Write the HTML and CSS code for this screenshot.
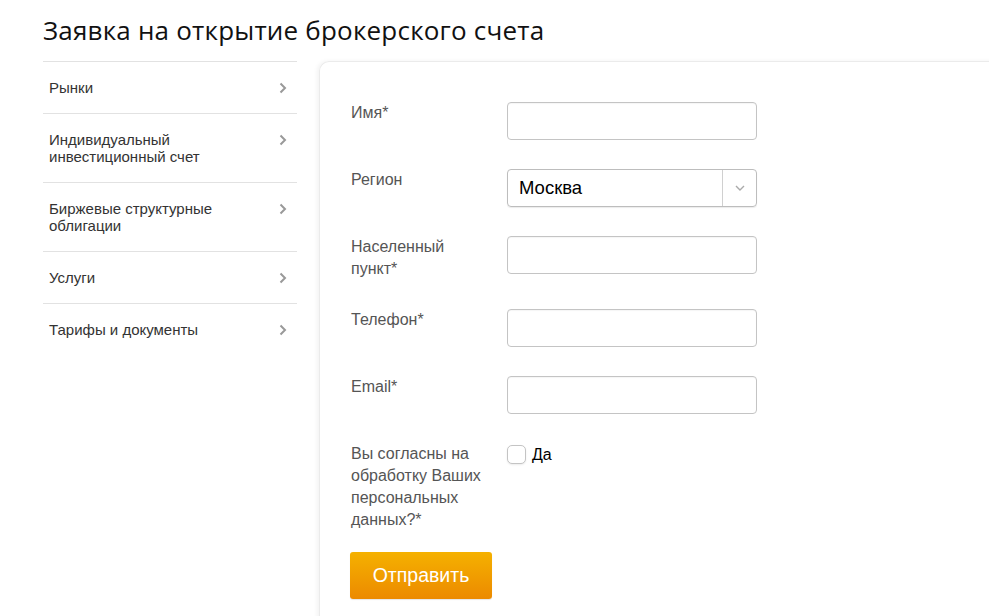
FILE: index.html
```html
<!DOCTYPE html>
<html lang="ru">
<head>
<meta charset="utf-8">
<title>Заявка на открытие брокерского счета</title>
<link rel="stylesheet" href="styles.css">
</head>
<body>
<div class="page">
  <h1 class="title">Заявка на открытие брокерского счета</h1>
  <div class="layout">
    <nav class="sidebar">
      <a class="nav-item" href="#"><span>Рынки</span><svg class="chev" viewBox="0 0 8 12" width="8" height="12"><path d="M1.5 1.5 L6 6 L1.5 10.5" fill="none" stroke="#999" stroke-width="2"/></svg></a>
      <a class="nav-item" href="#"><span>Индивидуальный<br>инвестиционный счет</span><svg class="chev" viewBox="0 0 8 12" width="8" height="12"><path d="M1.5 1.5 L6 6 L1.5 10.5" fill="none" stroke="#999" stroke-width="2"/></svg></a>
      <a class="nav-item" href="#"><span>Биржевые структурные<br>облигации</span><svg class="chev" viewBox="0 0 8 12" width="8" height="12"><path d="M1.5 1.5 L6 6 L1.5 10.5" fill="none" stroke="#999" stroke-width="2"/></svg></a>
      <a class="nav-item" href="#"><span>Услуги</span><svg class="chev" viewBox="0 0 8 12" width="8" height="12"><path d="M1.5 1.5 L6 6 L1.5 10.5" fill="none" stroke="#999" stroke-width="2"/></svg></a>
      <a class="nav-item last" href="#"><span>Тарифы и документы</span><svg class="chev" viewBox="0 0 8 12" width="8" height="12"><path d="M1.5 1.5 L6 6 L1.5 10.5" fill="none" stroke="#999" stroke-width="2"/></svg></a>
    </nav>
    <form class="card">
      <div class="row">
        <label class="label">Имя*</label>
        <input class="field" type="text">
      </div>
      <div class="row">
        <label class="label">Регион</label>
        <div class="select">
          <span class="select-value">Москва</span>
          <span class="select-arrow"><svg viewBox="0 0 10 6" width="10" height="6"><path d="M1 1 L5 5 L9 1" fill="none" stroke="#aaa" stroke-width="1.4"/></svg></span>
        </div>
      </div>
      <div class="row">
        <label class="label">Населенный<br>пункт*</label>
        <input class="field" type="text">
      </div>
      <div class="row">
        <label class="label">Телефон*</label>
        <input class="field" type="text">
      </div>
      <div class="row">
        <label class="label">Email*</label>
        <input class="field" type="text">
      </div>
      <div class="row consent">
        <label class="label">Вы согласны на<br>обработку Ваших<br>персональных<br>данных?*</label>
        <label class="check"><span class="box"></span><span class="check-text">Да</span></label>
      </div>
      <button class="submit" type="button">Отправить</button>
    </form>
  </div>
</div>
</body>
</html>
```
FILE: styles.css
```css
html, body {
  margin: 0;
  padding: 0;
  background: #fff;
  overflow: hidden;
}
.page {
  padding: 0 0 0 43px;
}
.title {
  margin: 0;
  padding: 12px 0 12px 0;
  font-family: "Open Sans", "Liberation Sans", sans-serif;
  font-weight: 400;
  font-size: 26px;
  line-height: 37px;
  color: #111;
  letter-spacing: 0.2px;
}
.layout {
  display: flex;
  align-items: flex-start;
  gap: 22px;
}
.sidebar {
  width: 254px;
  flex: none;
  border-top: 1px solid #e2e2e2;
  display: flex;
  flex-direction: column;
}
.nav-item {
  display: flex;
  justify-content: space-between;
  align-items: flex-start;
  padding: 17px 10px 17px 6px;
  border-bottom: 1px solid #e2e2e2;
  font-family: "Liberation Sans", Arial, sans-serif;
  font-size: 15px;
  line-height: 17px;
  color: #333;
  text-decoration: none;
}
.nav-item.last {
  border-bottom: none;
}
.chev {
  margin-top: 3px;
  flex: none;
}
.card {
  flex: 1;
  margin-right: -40px;
  min-height: 620px;
  border: 1px solid #ebebeb;
  border-right: none;
  border-radius: 10px 0 0 0;
  box-shadow: -2px 0 4px rgba(0,0,0,0.05);
  padding: 40px 0 0 31px;
  display: flex;
  flex-direction: column;
  font-family: "Liberation Sans", Arial, sans-serif;
}
.row {
  display: flex;
  align-items: flex-start;
  margin-bottom: 29px;
}
.row.consent {
  margin-bottom: 21px;
}
.label {
  width: 156px;
  flex: none;
  font-size: 16px;
  line-height: 22px;
  color: #555;
}
.field {
  box-sizing: border-box;
  width: 250px;
  height: 38px;
  margin: 0;
  border: 1px solid #c4c4c4;
  border-radius: 4px;
  background: #fff;
  box-shadow: inset 0 1px 1px rgba(0,0,0,0.04);
}
.select {
  box-sizing: border-box;
  width: 250px;
  height: 38px;
  border: 1px solid #bdbdbd;
  border-radius: 4px;
  display: flex;
  align-items: stretch;
  box-shadow: 0 1px 1px rgba(0,0,0,0.08);
}
.select-value {
  flex: 1;
  display: flex;
  align-items: center;
  padding-left: 11px;
  font-size: 18.5px;
  color: #000;
}
.select-arrow {
  width: 33px;
  border-left: 1px solid #d0d0d0;
  display: flex;
  align-items: center;
  justify-content: center;
}
.check {
  display: flex;
  align-items: center;
  gap: 6px;
  padding-top: 2px;
}
.box {
  box-sizing: border-box;
  width: 19px;
  height: 19px;
  border: 1px solid #c4c4c4;
  border-radius: 5px;
  background: #fff;
  box-shadow: 0 1px 2px rgba(0,0,0,0.08);
}
.check-text {
  font-size: 16px;
  color: #000;
}
.submit {
  align-self: flex-start;
  width: 142px;
  height: 47px;
  margin: 0 0 0 -1px;
  border: none;
  border-radius: 3px;
  background: linear-gradient(to bottom, #f5b100, #ec8a00);
  color: #fff;
  font-family: "Liberation Sans", Arial, sans-serif;
  font-size: 19.5px;
  cursor: pointer;
  box-shadow: 0 1px 1px rgba(0,0,0,0.1);
}
```
